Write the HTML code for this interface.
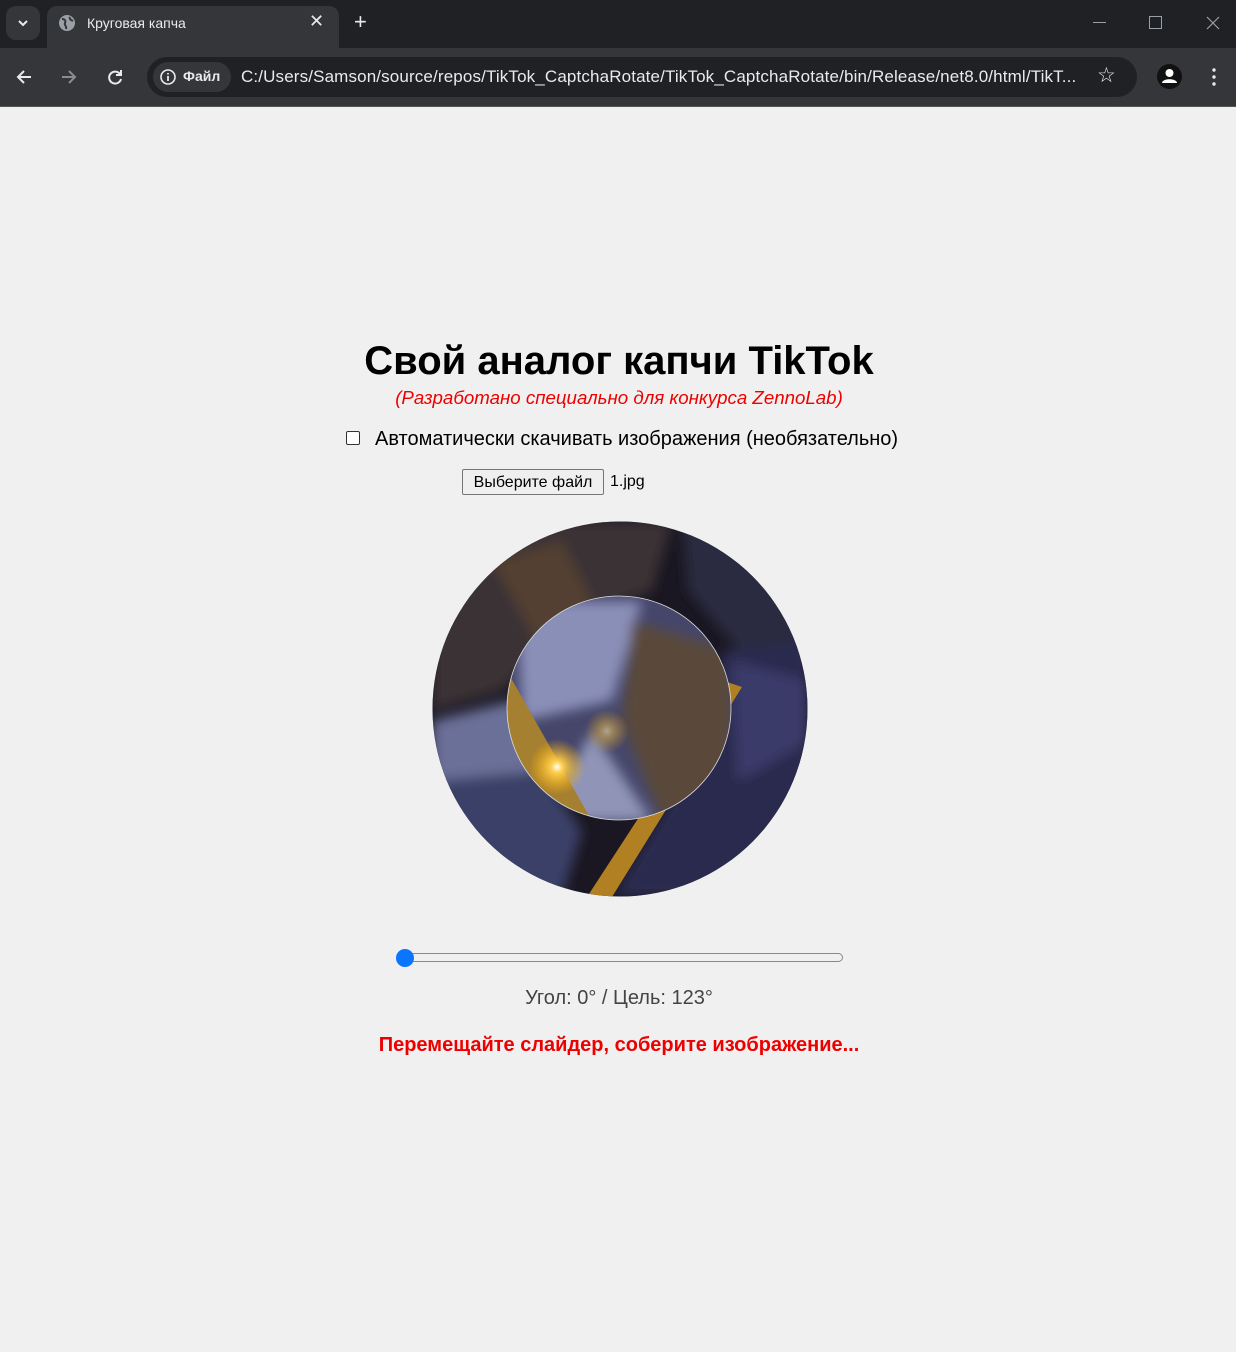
<!DOCTYPE html>
<html><head><meta charset="utf-8"><style>
*{margin:0;padding:0;box-sizing:border-box}
body{width:1236px;height:1352px;background:#f0f0f0;font-family:"Liberation Sans",Arial,sans-serif;position:relative;overflow:hidden}
.abs{position:absolute}
</style></head><body>
<div class="abs" style="left:0;top:0;width:1236px;height:48px;background:#202124"></div>
<div class="abs" style="left:6px;top:6px;width:34px;height:34px;border-radius:10px;background:#35363a"></div>
<svg class="abs" style="left:16px;top:17px" width="14" height="12"><path d="M3 4l4 4 4-4" stroke="#e8eaed" stroke-width="2" fill="none"/></svg>
<div class="abs" style="left:47px;top:6px;width:292px;height:42px;background:#35363a;border-radius:10px 10px 0 0"></div>
<svg class="abs" style="left:58px;top:14px" width="18" height="18"><circle cx="9" cy="9" r="8" fill="#9aa0a6"/><path d="M4 5c3 0 4 2 3 4s2 3 1 6M12 3c-1 2 1 3 3 4" stroke="#35363a" stroke-width="2" fill="none"/></svg>
<div class="abs" style="left:87px;top:15px;color:#e8eaed;font-size:14px">Круговая капча</div>
<div class="abs" style="left:309px;top:11px;color:#e8eaed;font-size:18px">✕</div>
<div class="abs" style="left:354px;top:9px;color:#e8eaed;font-size:22px">+</div>
<div class="abs" style="left:1093px;top:22px;width:13px;height:1px;background:#9aa0a6"></div>
<div class="abs" style="left:1149px;top:16px;width:13px;height:13px;border:1px solid #9aa0a6"></div>
<svg class="abs" style="left:1206px;top:16px" width="14" height="14"><path d="M1 1l12 12M13 1L1 13" stroke="#9aa0a6" stroke-width="1.2"/></svg>
<div class="abs" style="left:0;top:48px;width:1236px;height:59px;background:#35363a;border-bottom:1px solid #555"></div>
<svg class="abs" style="left:14px;top:67px" width="20" height="20"><path d="M17 10H4M10 4l-6 6 6 6" stroke="#e8eaed" stroke-width="2" fill="none"/></svg>
<svg class="abs" style="left:59px;top:67px" width="20" height="20"><path d="M3 10h13M10 4l6 6-6 6" stroke="#8a8c90" stroke-width="2" fill="none"/></svg>
<svg class="abs" style="left:105px;top:67px" width="20" height="20"><path d="M15 7a6 6 0 1 0 1 5" stroke="#e8eaed" stroke-width="2" fill="none"/><path d="M16 3v5h-5" stroke="#e8eaed" stroke-width="2" fill="none"/></svg>
<div class="abs" style="left:147px;top:57px;width:990px;height:40px;background:#202124;border-radius:20px"></div>
<div class="abs" style="left:153px;top:62px;width:78px;height:30px;background:#35363a;border-radius:15px"></div>
<svg class="abs" style="left:159px;top:68px" width="18" height="18"><circle cx="9" cy="9" r="7" stroke="#e8eaed" stroke-width="1.6" fill="none"/><path d="M9 8v5M9 5v1.5" stroke="#e8eaed" stroke-width="1.8"/></svg>
<div class="abs" style="left:183px;top:68px;color:#e8eaed;font-size:14px;font-weight:bold">Файл</div>
<div class="abs" style="left:241px;top:67px;color:#e8eaed;font-size:17px;letter-spacing:0.14px;white-space:nowrap">C:/Users/Samson/source/repos/TikTok_CaptchaRotate/TikTok_CaptchaRotate/bin/Release/net8.0/html/TikT...</div>
<div class="abs" style="left:1097px;top:63px;color:#e8eaed;font-size:21px">☆</div>
<div class="abs" style="left:1157px;top:64px;width:25px;height:25px;border-radius:50%;background:#111"></div>
<svg class="abs" style="left:1157px;top:64px" width="25" height="25"><circle cx="12.5" cy="9" r="4" fill="#fff"/><path d="M5 19c0-5 15-5 15 0z" fill="#fff"/></svg>
<svg class="abs" style="left:1210px;top:67px" width="8" height="20"><circle cx="4" cy="3" r="1.7" fill="#e8eaed"/><circle cx="4" cy="10" r="1.7" fill="#e8eaed"/><circle cx="4" cy="17" r="1.7" fill="#e8eaed"/></svg>

<div class="abs" style="left:0;top:339px;width:1238px;text-align:center;font-size:40px;font-weight:bold;color:#000">Свой аналог капчи TikTok</div>
<div class="abs" style="left:0;top:387px;width:1238px;text-align:center;font-size:18.7px;font-style:italic;color:#e00">(Разработано специально для конкурса ZennoLab)</div>
<div class="abs" style="left:346px;top:431px;width:14px;height:14px;border:1px solid #333;border-radius:2px;background:#fff"></div>
<div class="abs" style="left:375px;top:428px;font-size:20px;color:#000">Автоматически скачивать изображения (необязательно)</div>
<div class="abs" style="left:462px;top:469px;width:142px;height:26px;border:1px solid #767676;background:#efefef;border-radius:2px;font-size:16px;text-align:center;line-height:25px">Выберите файл</div>
<div class="abs" style="left:610px;top:473px;font-size:16px">1.jpg</div>

<svg class="abs" style="left:432px;top:521px" width="376" height="376" viewBox="0 0 376 376">
<defs>
<clipPath id="o"><circle cx="188" cy="188" r="187.5"/></clipPath>
<clipPath id="i"><circle cx="187" cy="187" r="112"/></clipPath>
<radialGradient id="sun" cx="0.5" cy="0.5" r="0.5"><stop offset="0" stop-color="#fff"/><stop offset="0.2" stop-color="#ffd050"/><stop offset="1" stop-color="#ffb000" stop-opacity="0"/></radialGradient>
<filter id="b"><feGaussianBlur stdDeviation="6"/></filter>
</defs>
<g clip-path="url(#o)">
<rect width="376" height="376" fill="#1a1722"/>
<g filter="url(#b)">
<path d="M0 0h240l-20 70-80 30-70 70-70 20z" fill="#3a3035"/>
<path d="M60 40l70-20 30 60-50 50z" fill="#5a4630" opacity="0.8"/>
<path d="M250 0h126v120l-60 20-60-70z" fill="#2a2a40"/>
<path d="M0 200l80-20 40 50-40 40-80 10z" fill="#6a7098"/>
<path d="M0 260l110-10 40 60-20 66H0z" fill="#3a4068"/>
<path d="M290 130l86-10v256H180l90-150z" fill="#2c2c50"/>
<path d="M300 140l76 20v60l-70 40z" fill="#3a3a6a"/>
</g>
<path d="M155 376l140-215 15 5-130 210z" fill="#b08022"/>
</g>
<g clip-path="url(#i)">
<rect x="75" y="75" width="224" height="224" fill="#45466a"/>
<g filter="url(#b)">
<path d="M85 80h125l-30 100-90 20z" fill="#8a8fb8"/>
<path d="M200 100l100 30v150l-70 20-40-100z" fill="#5a4a3a"/>
<path d="M110 300l50-90 60 90z" fill="#9095b8"/>
</g>
<path d="M75 150l85 150H75z" fill="#a58030"/>
<circle cx="125" cy="246" r="28" fill="url(#sun)"/>
<circle cx="175" cy="210" r="22" fill="url(#sun)" opacity="0.5"/>
</g>
<circle cx="187" cy="187" r="112" fill="none" stroke="#ddd" stroke-width="0.8"/>
</svg>

<div class="abs" style="left:400px;top:953px;width:443px;height:9px;border:1px solid #888;border-radius:5px;background:#f0f0f0"></div>
<div class="abs" style="left:396px;top:949px;width:18px;height:18px;border-radius:50%;background:#0a75ff"></div>
<div class="abs" style="left:0;top:987px;width:1238px;text-align:center;font-size:20px;color:#444">Угол: 0° / Цель: 123°</div>
<div class="abs" style="left:0;top:1034px;width:1238px;text-align:center;font-size:20px;font-weight:bold;color:#e00">Перемещайте слайдер, соберите изображение...</div>
</body></html>
